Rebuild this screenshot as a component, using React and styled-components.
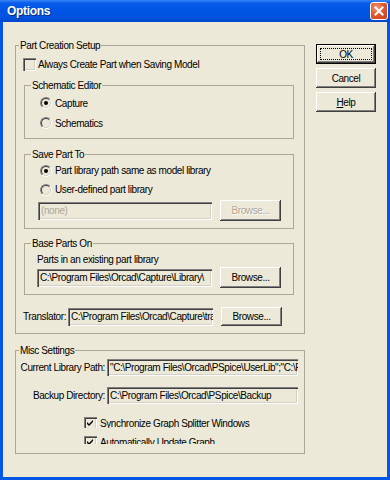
import React from "react";
import styled, { createGlobalStyle } from "styled-components";

const FONT = `"Liberation Sans Narrow", "Liberation Sans", Arial, sans-serif`;

const GlobalStyle = createGlobalStyle`
  html, body { margin: 0; padding: 0; background: #fff; }
  body { width: 390px; height: 480px; overflow: hidden; }
  * { box-sizing: border-box; }
`;

const Window = styled.div`
  width: 390px;
  height: 480px;
  display: flex;
  flex-direction: column;
  background: #0556E4;
  font-family: ${FONT};
  font-size: 10px;
  letter-spacing: -0.4px;
  color: #000;
`;

const TitleBar = styled.div`
  height: 22px;
  flex: none;
  display: flex;
  align-items: center;
  justify-content: space-between;
  padding: 0 2px 0 7px;
  background: linear-gradient(to bottom, #3A86F8 0px, #0A5DEA 3px, #0055E5 9px, #0052E0 17px, #0047CC 22px);
`;

const Title = styled.span`
  color: #fff;
  font-weight: bold;
  font-size: 12px;
  letter-spacing: -0.3px;
  text-shadow: 1px 1px #0B2A80;
`;

const CloseButton = styled.div`
  width: 18px;
  height: 18px;
  border: 1px solid #fff;
  border-radius: 3px;
  background: radial-gradient(circle at 35% 30%, #F29A7A 0%, #E2592F 45%, #C7401C 100%);
  display: flex;
  align-items: center;
  justify-content: center;
`;

const Body = styled.div`
  flex: 1;
  margin: 0 3px 3px;
  background: #ECE9D8;
  display: flex;
  align-items: flex-start;
  gap: 11px;
  padding: 17px 0 0 12px;
`;

const LeftColumn = styled.div`
  width: 290px;
  display: flex;
  flex-direction: column;
`;

const ButtonColumn = styled.div`
  width: 60px;
  margin-top: 5px;
  display: flex;
  flex-direction: column;
  gap: 4px;
`;

const Group = styled.fieldset`
  margin: ${(p) => p.$mt || 0}px 0 0 ${(p) => p.$ml || 0}px;
  padding: 0;
  border: 1px solid #ACA899;
  min-width: 0;
`;

const Legend = styled.legend`
  margin-left: ${(p) => p.$indent}px;
  padding: 0 1px;
  height: 13px;
  line-height: 13px;
`;

const GroupContent = styled.div`
  display: flex;
  flex-direction: column;
  padding: ${(p) => p.$pad};
`;

const CheckRow = styled.div`
  display: flex;
  align-items: flex-start;
  gap: ${(p) => p.$gap ?? 2}px;
  height: ${(p) => p.$h || 13}px;
  margin: ${(p) => p.$m || "0"};
  overflow: hidden;
  line-height: 13px;
  white-space: nowrap;
`;

const CheckBox = styled.span`
  flex: none;
  width: 13px;
  height: 13px;
  background: #ECE9D8;
  box-shadow: inset 1px 1px #808080, inset 2px 2px #404040, inset -1px -1px #fff, inset -2px -2px #D4D0C8;
  display: flex;
  align-items: center;
  justify-content: center;
`;

const RadioRow = styled.div`
  display: flex;
  align-items: center;
  gap: 3px;
  height: ${(p) => p.$h}px;
  margin-left: 2px;
  white-space: nowrap;
`;

const Radio = styled.span`
  position: relative;
  flex: none;
  width: 12px;
  height: 12px;
  border-radius: 50%;
  border: 1px solid;
  border-color: #808080 #fff #fff #808080;
  &::before {
    content: "";
    position: absolute;
    inset: 0;
    border-radius: 50%;
    border: 1px solid;
    border-color: #404040 #D4D0C8 #D4D0C8 #404040;
    background: #ECE9D8;
  }
  &::after {
    content: "";
    display: ${(p) => (p.$on ? "block" : "none")};
    position: absolute;
    left: 3px;
    top: 3px;
    width: 4px;
    height: 4px;
    border-radius: 50%;
    background: #000;
  }
`;

const FieldRow = styled.div`
  display: flex;
  align-items: center;
  gap: ${(p) => p.$gap ?? 8}px;
  height: ${(p) => p.$h}px;
  margin-top: ${(p) => p.$mt || 0}px;
`;

const Field = styled.div`
  width: ${(p) => p.$w}px;
  height: ${(p) => p.$h || 18}px;
  flex: none;
  padding: 0 2px 0 3px;
  display: flex;
  align-items: center;
  overflow: hidden;
  white-space: nowrap;
  color: ${(p) => (p.$disabled ? "#ACA899" : "#000")};
  background: #ECE9D8;
  box-shadow: inset 1px 1px #808080, inset 2px 2px #404040, inset -1px -1px #fff, inset -2px -2px #D4D0C8;
`;

const Label = styled.span`
  flex: none;
  width: ${(p) => (p.$w ? `${p.$w}px` : "auto")};
  line-height: 13px;
  white-space: nowrap;
  text-align: ${(p) => p.$align || "left"};
`;

const Button = styled.div`
  position: relative;
  width: ${(p) => p.$w || 60}px;
  height: ${(p) => p.$h || 20}px;
  flex: none;
  display: flex;
  align-items: center;
  justify-content: center;
  background: #ECE9D8;
  color: ${(p) => (p.$disabled ? "#ACA899" : "#000")};
  text-shadow: ${(p) => (p.$disabled ? "1px 1px #fff" : "none")};
  border: ${(p) => (p.$default ? "1px solid #000" : "none")};
  box-shadow: inset -1px -1px #404040, inset 1px 1px #fff, inset -2px -2px #808080;
  &::after {
    content: "";
    display: ${(p) => (p.$default ? "block" : "none")};
    position: absolute;
    inset: 3px;
    border: 1px dotted #000;
  }
`;

const MiscGrid = styled.div`
  display: grid;
  grid-template-columns: 89px 191px;
  column-gap: 2px;
  row-gap: 11px;
  align-items: center;
  margin-top: 2px;
`;

function Check({ checked }) {
  return (
    <CheckBox>
      {checked && (
        <svg width="7" height="7" viewBox="0 0 7 7">
          <path d="M0 2 L2 4 L6 0 L6 2 L2 6 L0 4 Z" fill="#000" />
        </svg>
      )}
    </CheckBox>
  );
}

export default function App() {
  return (
    <>
      <GlobalStyle />
      <Window>
        <TitleBar>
          <Title>Options</Title>
          <CloseButton>
            <svg width="10" height="10" viewBox="0 0 10 10">
              <path d="M1.5 1.5 L8.5 8.5 M8.5 1.5 L1.5 8.5" stroke="#fff" strokeWidth="2" strokeLinecap="square" />
            </svg>
          </CloseButton>
        </TitleBar>
        <Body>
          <LeftColumn>
            <Group>
              <Legend $indent={3}>Part Creation Setup</Legend>
              <GroupContent $pad="6px 10px 7px 7px">
                <CheckRow>
                  <Check />
                  <span>Always Create Part when Saving Model</span>
                </CheckRow>

                <Group $mt={8} $ml={1}>
                  <Legend $indent={6}>Schematic Editor</Legend>
                  <GroupContent $pad="1px 10px 5px 13px">
                    <RadioRow $h={20}>
                      <Radio $on />
                      <span>Capture</span>
                    </RadioRow>
                    <RadioRow $h={20}>
                      <Radio />
                      <span>Schematics</span>
                    </RadioRow>
                  </GroupContent>
                </Group>

                <Group $mt={9} $ml={1}>
                  <Legend $indent={6}>Save Part To</Legend>
                  <GroupContent $pad="0 10px 7px 13px">
                    <RadioRow $h={19}>
                      <Radio $on />
                      <span>Part library path same as model library</span>
                    </RadioRow>
                    <RadioRow $h={19}>
                      <Radio />
                      <span>User-defined part library</span>
                    </RadioRow>
                    <FieldRow $h={21} $mt={1}>
                      <Field $w={174} $disabled>(none)</Field>
                      <Button $w={61} $h={21} $disabled>Browse...</Button>
                    </FieldRow>
                  </GroupContent>
                </Group>

                <Group $mt={8} $ml={1}>
                  <Legend $indent={6}>Base Parts On</Legend>
                  <GroupContent $pad="3px 10px 6px 12px">
                    <Label>Parts in an existing part library</Label>
                    <FieldRow $h={21} $mt={1}>
                      <Field $w={175}>{"C:\\Program Files\\Orcad\\Capture\\Library\\"}</Field>
                      <Button $w={61} $h={21}>Browse...</Button>
                    </FieldRow>
                  </GroupContent>
                </Group>

                <FieldRow $h={19} $mt={12} $gap={0}>
                  <Label $w={45}>Translator:</Label>
                  <Field $w={145} $h={18}>{"C:\\Program Files\\Orcad\\Capture\\translators"}</Field>
                  <Button $w={61} $h={19} style={{ marginLeft: 8 }}>Browse...</Button>
                </FieldRow>
              </GroupContent>
            </Group>

            <Group $mt={10}>
              <Legend $indent={3}>Misc Settings</Legend>
              <GroupContent $pad="0 5px 9px 0">
                <MiscGrid>
                  <Label $align="right">Current Library Path:</Label>
                  <Field $w={191} $h={17}>
                    {"\"C:\\Program Files\\Orcad\\PSpice\\UserLib\";\"C:\\Program Files\\Orcad\\PSpice\\Lib\""}
                  </Field>
                  <Label $align="right">Backup Directory:</Label>
                  <Field $w={191} $h={17}>{"C:\\Program Files\\Orcad\\PSpice\\Backup"}</Field>
                </MiscGrid>
                <CheckRow $h={11} $gap={3} $m="13px 0 0 68px">
                  <Check checked />
                  <span>Synchronize Graph Splitter Windows</span>
                </CheckRow>
                <CheckRow $h={8} $gap={3} $m="8px 0 0 68px">
                  <Check checked />
                  <span>Automatically Update Graph</span>
                </CheckRow>
              </GroupContent>
            </Group>
          </LeftColumn>

          <ButtonColumn>
            <Button $default>OK</Button>
            <Button>Cancel</Button>
            <Button>
              <span><u>H</u>elp</span>
            </Button>
          </ButtonColumn>
        </Body>
      </Window>
    </>
  );
}
